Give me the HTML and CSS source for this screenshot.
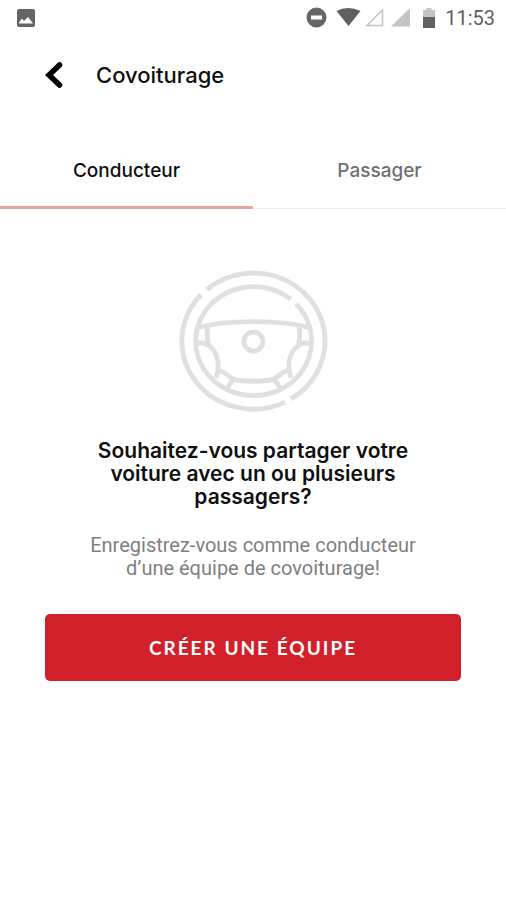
FILE: index.html
```html
<!DOCTYPE html>
<html lang="fr">
<head>
<meta charset="utf-8">
<meta name="viewport" content="width=device-width, initial-scale=1">
<title>Covoiturage</title>
<link rel="stylesheet" href="styles.css">
</head>
<body>
<div class="status">
  <svg class="status-picture" width="20" height="20" viewBox="0 0 20 20" aria-hidden="true"><rect x="1" y="1" width="18" height="18" rx="2" fill="#666"/><path d="M3 15.500v-1l3-4 2 2.500L12 9l5 6.500z" fill="#fff"/></svg>
  <div class="status-icons">
    <svg width="117" height="24" viewBox="0 0 117 24" aria-hidden="true">
      <circle cx="10.500" cy="11.500" r="10" fill="#666"/><rect x="5" y="9.500" width="11" height="4" fill="#fff"/>
      <path d="M30.500 5Q42 -1 54.500 5L42.500 20z" fill="#606060"/>
      <path d="M61 19.500H76.500V4z" fill="none" stroke="#c4c4c4" stroke-width="1.500"/>
      <path d="M85 20.500H104V2z" fill="#c4c4c4"/>
    </svg>
    <svg width="12" height="20" viewBox="0 0 12 20" aria-hidden="true"><path d="M3.500 0h5v2H12v8H0V2h3.500z" fill="#c4c4c4"/><path d="M0 9h12v11H0z" fill="#606060"/></svg>
    <time class="clock">11:53</time>
  </div>
</div>
<header class="bar">
  <button class="back" type="button" aria-label="Retour"><svg width="20" height="28" viewBox="0 0 20 28" aria-hidden="true"><path d="M15.500 4L5 14l10.500 10" fill="none" stroke="#000" stroke-width="5.500" stroke-linecap="round"/></svg></button>
  <h1 class="title">Covoiturage</h1>
</header>
<nav class="tabs">
  <a class="tab tab-active" href="#conducteur" aria-current="page">Conducteur</a>
  <a class="tab" href="#passager">Passager</a>
</nav>
<main class="content">
  <svg class="wheel" width="166" height="160" viewBox="0 0 166 160" aria-hidden="true">
    <g fill="none" stroke="#e0e0e0" stroke-width="4.800">
      <path d="M36.700 29.600A71.500 68 0 1 1 121 138.900"/>
      <path d="M115 142.100A71.500 68 0 0 1 31 34.800"/>
      <path d="M126 43.900A58 54.500 0 1 1 120.700 39.200"/>
      <path d="M27 68C55 59.500 112 59.500 140 68"/>
      <path d="M38 66Q36 75 38.500 84M129 66Q131 75 128.500 84"/>
      <path d="M25 83H34C45 87 52 101 46 118M142 83H133C122 87 115 101 121 118"/>
      <path d="M48 110C57 112 60 120 69 120.500Q83.500 122 98 120.500C107 120 110 112 119 110"/>
      <path d="M64 118L56 130M103 118L112 130"/>
      <circle cx="83.500" cy="81.500" r="9.500"/>
    </g>
  </svg>
  <h2 class="question">Souhaitez-vous partager votre voiture avec un ou plusieurs passagers?</h2>
  <p class="hint">Enregistrez-vous comme conducteur d’une équipe de covoiturage!</p>
  <button class="create" type="button">CRÉER UNE ÉQUIPE</button>
</main>
</body>
</html>
```
FILE: styles.css
```css
* { box-sizing: border-box; }
body {
  margin: 0;
  background: #fff;
  color: #101010;
  font-family: Inter, "Liberation Sans", sans-serif;
}
.status {
  display: flex;
  align-items: center;
  justify-content: space-between;
  height: 36px;
  padding: 0 11px 0 16px;
}
.status-icons { display: flex; align-items: center; }
.clock {
  margin-left: 10px;
  color: #606060;
  font-family: Roboto, sans-serif;
  font-size: 20px;
}
.bar {
  display: flex;
  align-items: center;
  gap: 32px;
  height: 77px;
  padding: 0 44px;
}
.back {
  display: flex;
  padding: 0;
  border: 0;
  background: none;
}
.title {
  margin: 0;
  font-size: 22px;
  font-weight: 500;
  line-height: 28px;
}
.tabs {
  display: flex;
  align-items: flex-end;
  margin-top: 19px;
}
.tab {
  flex: 1;
  height: 77px;
  border-bottom: 1px solid #eee;
  color: #707070;
  font-size: 19px;
  font-weight: 500;
  line-height: 77px;
  text-align: center;
  text-decoration: none;
}
.tab-active {
  border-bottom: 3px solid #e7a39f;
  color: #101010;
}
.content {
  display: flex;
  flex-direction: column;
  align-items: center;
  padding: 51px 45px 0;
}
.question {
  max-width: 340px;
  margin: 19px 0 0;
  font-size: 21px;
  font-weight: 600;
  line-height: 23px;
  text-align: center;
}
.hint {
  max-width: 340px;
  margin: 26px 0 0;
  color: #808080;
  font-family: Roboto, sans-serif;
  font-size: 20px;
  line-height: 23px;
  text-align: center;
}
.create {
  width: 100%;
  height: 67px;
  margin-top: 34px;
  border: 0;
  border-radius: 5px;
  background: #d12029;
  color: #fff;
  font-family: Lato, sans-serif;
  font-size: 19px;
  font-weight: 700;
  letter-spacing: 2px;
}
```
